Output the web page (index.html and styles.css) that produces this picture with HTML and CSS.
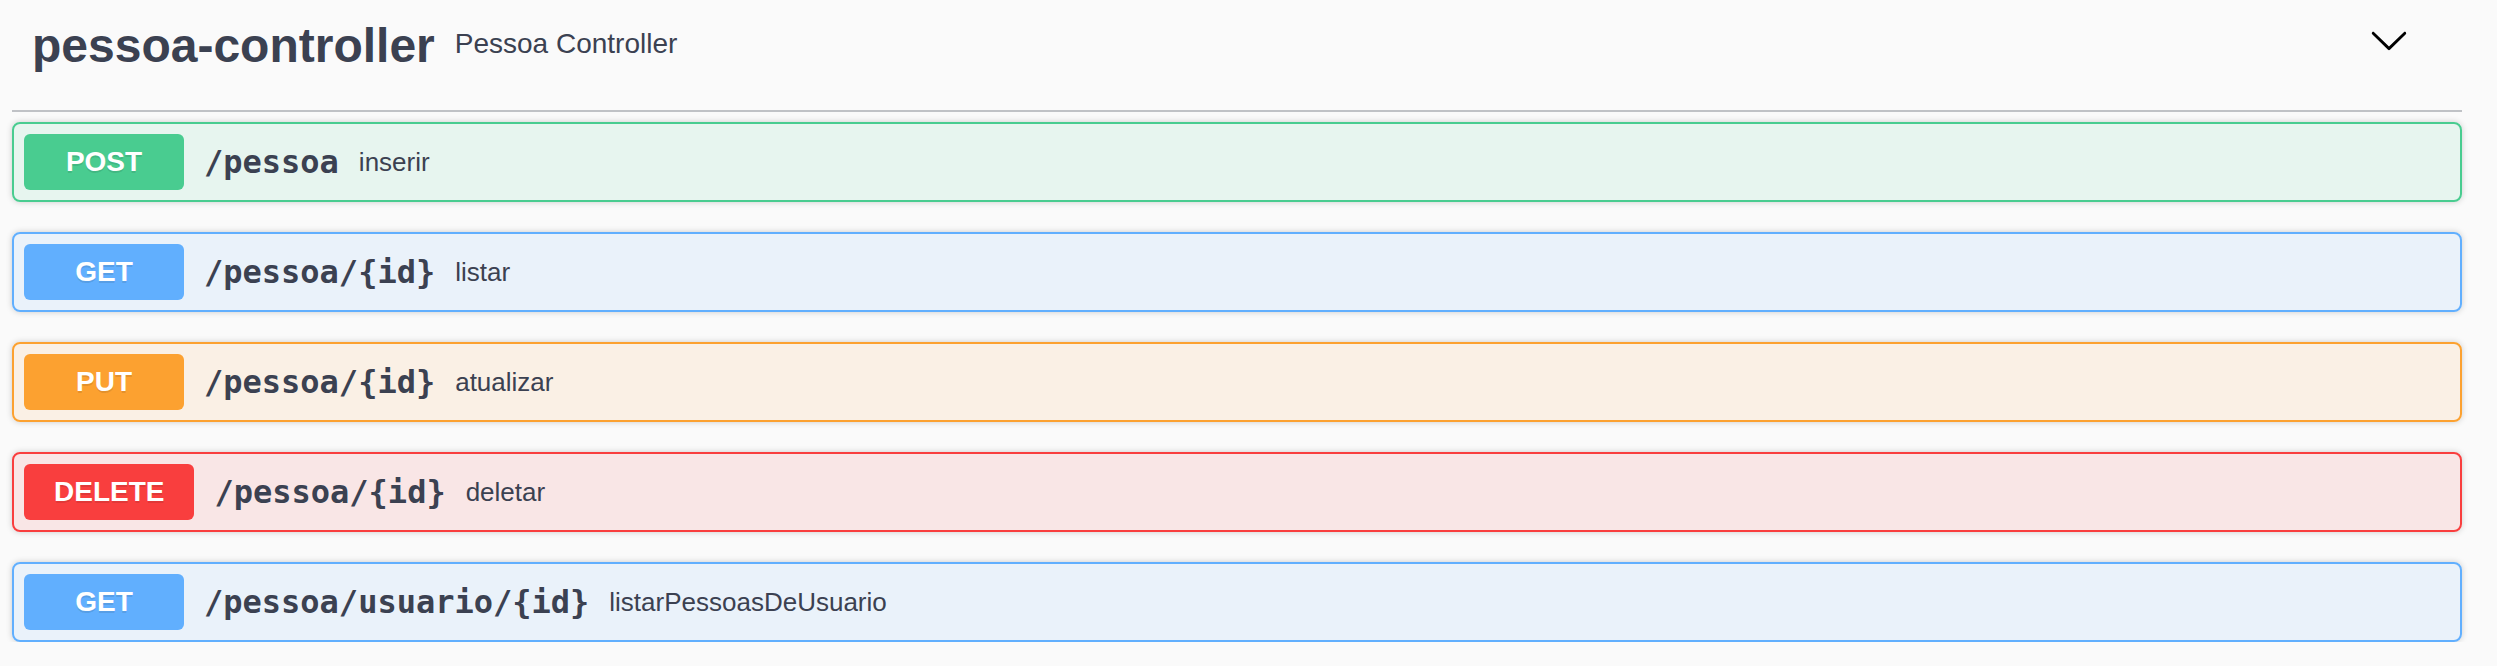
FILE: index.html
```html
<!DOCTYPE html>
<html lang="pt">
<head>
<meta charset="utf-8">
<title>pessoa-controller</title>
<link rel="stylesheet" href="styles.css">
</head>
<body>
<div class="page">
  <section class="tag-section">
    <h3 class="tag-header">
      <span class="tag-title">pessoa-controller</span>
      <small class="tag-desc">Pessoa Controller</small>
      <button class="expand" aria-label="collapse">
        <svg width="40" height="40" viewBox="0 0 20 20" aria-hidden="true">
          <path d="M17.418 6.109c.272-.268.709-.268.979 0s.271.701 0 .969l-7.908 7.83c-.27.268-.707.268-.979 0l-7.908-7.830c-.27-.268-.27-.701 0-.969.271-.268.709-.268.979 0L10 13.25l7.418-7.141z"/>
        </svg>
      </button>
    </h3>
    <div class="ops">
      <div class="op op-post">
        <span class="method">POST</span>
        <span class="path">/pessoa</span>
        <span class="summary">inserir</span>
      </div>
      <div class="op op-get">
        <span class="method">GET</span>
        <span class="path">/pessoa/{id}</span>
        <span class="summary">listar</span>
      </div>
      <div class="op op-put">
        <span class="method">PUT</span>
        <span class="path">/pessoa/{id}</span>
        <span class="summary">atualizar</span>
      </div>
      <div class="op op-delete">
        <span class="method">DELETE</span>
        <span class="path">/pessoa/{id}</span>
        <span class="summary">deletar</span>
      </div>
      <div class="op op-get">
        <span class="method">GET</span>
        <span class="path">/pessoa/usuario/{id}</span>
        <span class="summary">listarPessoasDeUsuario</span>
      </div>
    </div>
  </section>
</div>
</body>
</html>
```

FILE: styles.css
```css
html, body {
  margin: 0;
  padding: 0;
  background: #fafafa;
}

body {
  font-family: "Liberation Sans", Arial, sans-serif;
  color: #3b4151;
}

.page {
  padding: 0 35px 0 12px;
}

.tag-header {
  display: flex;
  align-items: flex-start;
  height: 112px;
  box-sizing: border-box;
  margin: 0 0 10px;
  padding: 0 40px 0 20px;
  border-bottom: 2px solid rgba(59, 65, 81, 0.3);
  font-weight: normal;
}

.tag-title {
  margin-top: 18px;
  font-size: 48px;
  line-height: 56px;
  font-weight: 700;
  color: #3b4151;
}

.tag-desc {
  flex: 1;
  margin-top: 28px;
  padding: 0 20px;
  font-size: 28px;
  line-height: 32px;
  font-weight: 400;
  color: #3b4151;
}

.expand {
  margin: 20px 13px 0 0;
  padding: 0;
  border: none;
  background: none;
  width: 40px;
  height: 40px;
  line-height: 0;
  cursor: pointer;
}

.expand svg {
  fill: #000;
}

.ops {
  display: flex;
  flex-direction: column;
  gap: 30px;
}

.op {
  display: flex;
  align-items: center;
  height: 80px;
  box-sizing: border-box;
  padding: 0 10px;
  border: 2px solid;
  border-radius: 8px;
  box-shadow: 0 0 6px rgba(0, 0, 0, 0.19);
}

.method {
  box-sizing: border-box;
  min-width: 160px;
  height: 56px;
  padding: 0 30px;
  display: flex;
  align-items: center;
  justify-content: center;
  border-radius: 6px;
  font-size: 28px;
  font-weight: 700;
  color: #fff;
  text-shadow: 0 2px 0 rgba(0, 0, 0, 0.1);
}

.path {
  padding: 0 20px;
  font-family: "DejaVu Sans Mono", "Liberation Mono", monospace;
  font-size: 32px;
  font-weight: 700;
  color: #3b4151;
}

.summary {
  flex: 1 1 auto;
  font-size: 26px;
  color: #3b4151;
}

.op-post {
  border-color: #49cc90;
  background: rgba(73, 204, 144, 0.1);
}
.op-post .method { background: #49cc90; }

.op-get {
  border-color: #61affe;
  background: rgba(97, 175, 254, 0.1);
}
.op-get .method { background: #61affe; }

.op-put {
  border-color: #fca130;
  background: rgba(252, 161, 48, 0.1);
}
.op-put .method { background: #fca130; }

.op-delete {
  border-color: #f93e3e;
  background: rgba(249, 62, 62, 0.1);
}
.op-delete .method { background: #f93e3e; }
```
